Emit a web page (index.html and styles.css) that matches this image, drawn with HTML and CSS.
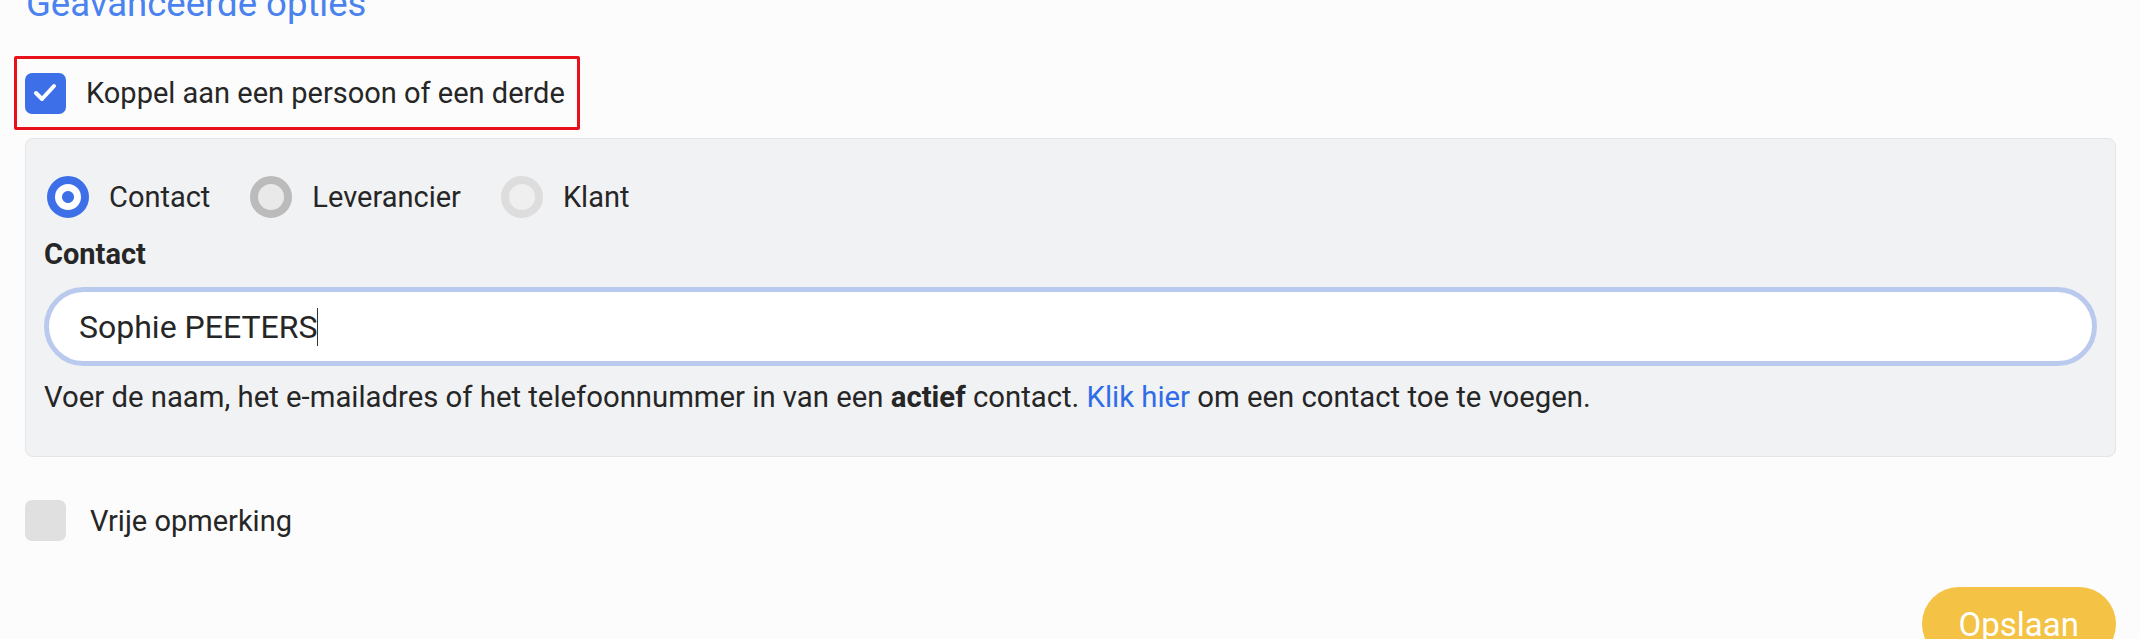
FILE: index.html
```html
<!DOCTYPE html>
<html>
<head>
    <meta charset="utf-8">
    <title> Geavanceerde opties </title>

    <!-- Styling -->
    <link rel="stylesheet" href="styles.css">
</head>
<body>
    <h2 class="section-title"> Geavanceerde opties </h2>

    <!-- Koppel -->
    <div class="highlight">
        <span class="check checked">
            <svg width="40" height="40" viewBox="0 0 40 40">
                <polyline points="11,20 17,26 29,13" fill="none" stroke="#fff" stroke-width="4" stroke-linecap="round" stroke-linejoin="round" />
            </svg>
        </span>
        <span class="check-label"> Koppel aan een persoon of een derde </span>
    </div>

    <!-- Contact panel -->
    <div class="panel">
        <div class="radios">
            <span class="radio selected"></span>
            <span class="radio-label">Contact</span>
            <span class="radio hover"></span>
            <span class="radio-label">Leverancier</span>
            <span class="radio"></span>
            <span class="radio-label">Klant</span>
        </div>

        <div class="field-label">Contact</div>
        <div class="field">Sophie PEETERS<span class="caret"></span></div>
        <p class="help">
            Voer de naam, het e-mailadres of het telefoonnummer in van een <b>actief</b> contact.
            <a href="#">Klik hier</a> om een contact toe te voegen.
        </p>
    </div>

    <!-- Vrije opmerking -->
    <div class="option">
        <span class="check"></span>
        <span class="check-label">Vrije opmerking</span>
    </div>

    <div class="actions">
        <button type="button" class="save">Opslaan</button>
    </div>
</body>
</html>
```

FILE: styles.css
```css
* {
    box-sizing: border-box;
    font-family: Roboto, "Liberation Sans", sans-serif;
}

:root {
    --text:       #262626;
    --blue:       #3d70e8;
    --title-blue: #4a82ef;
    --link:       #2f6ce8;
    --ring:       #bac9ee;
    --panel:      #f1f2f4;
    --panel-line: #e4e5e8;
    --yellow:     #f4c244;
    --red:        #e8101a;
}

body {
    margin: 0;
    padding: 0 24px 0 25px;

    color: var( --text );
    background-color: #fcfcfc;
}

.section-title {
    margin: -18px 0 0;
    padding-left: 1px;

    font-size: 36.5px;
    font-weight: normal;
    line-height: 43px;
    color: var( --title-blue );
}

/* checkboxes */
.highlight {
    display: inline-flex;
    align-items: center;
    height: 74px;

    margin: 31px 0 0 -11px;
    padding: 0 12px 0 8px;

    border: 3px solid var( --red );
    border-radius: 2px;
}

.check {
    display: block;
    flex: none;
    width: 41px;
    height: 41px;

    border-radius: 7px;
    background-color: #e0e0e0;
}

.check.checked {
    background-color: var( --blue );
}

.check svg {
    display: block;
}

.check-label {
    margin-left: 20px;
    font-size: 29px;
}

/* panel */
.panel {
    margin-top: 8px;
    padding: 37px 18px 42px;

    background-color: var( --panel );
    border: 1px solid var( --panel-line );
    border-radius: 8px;
}

.radios {
    display: flex;
    align-items: center;
    height: 42px;
}

.radio {
    flex: none;
    width: 42px;
    height: 42px;
    margin-left: 3px;

    border-radius: 50%;
    border: 8px solid #dddddd;
    background-color: #efefef;
}

.radio.hover {
    border-color: #bbbbbb;
    background-color: #e9e9e9;
}

.radio.selected {
    border-color: var( --blue );
    background: radial-gradient( circle, var( --blue ) 0 5.5px, #fff 6.5px );
}

.radio-label {
    margin: 0 37px 0 20px;
    font-size: 29px;
}

.field-label {
    margin-top: 19px;

    font-size: 29px;
    font-weight: bold;
    line-height: 34px;
}

.field {
    display: flex;
    align-items: center;
    height: 79px;
    margin-top: 16px;
    padding-left: 30px;

    font-size: 32px;

    background-color: #fff;
    border: 5px solid var( --ring );
    border-radius: 40px;
}

.caret {
    width: 1px;
    height: 38px;
    background-color: #333;
}

.help {
    margin: 14px 0 0;

    font-size: 29.3px;
    line-height: 34px;
}

.help a {
    color: var( --link );
    text-decoration: none;
}

/* footer */
.option {
    display: flex;
    align-items: center;
    margin-top: 43px;
}

.option .check-label {
    margin-left: 24px;
}

.actions {
    display: flex;
    justify-content: flex-end;
    margin-top: 46px;
}

.save {
    height: 74px;
    padding: 0 37px;

    font-size: 33px;
    color: #fff;

    background-color: var( --yellow );
    border: none;
    border-radius: 37px;
}
```
